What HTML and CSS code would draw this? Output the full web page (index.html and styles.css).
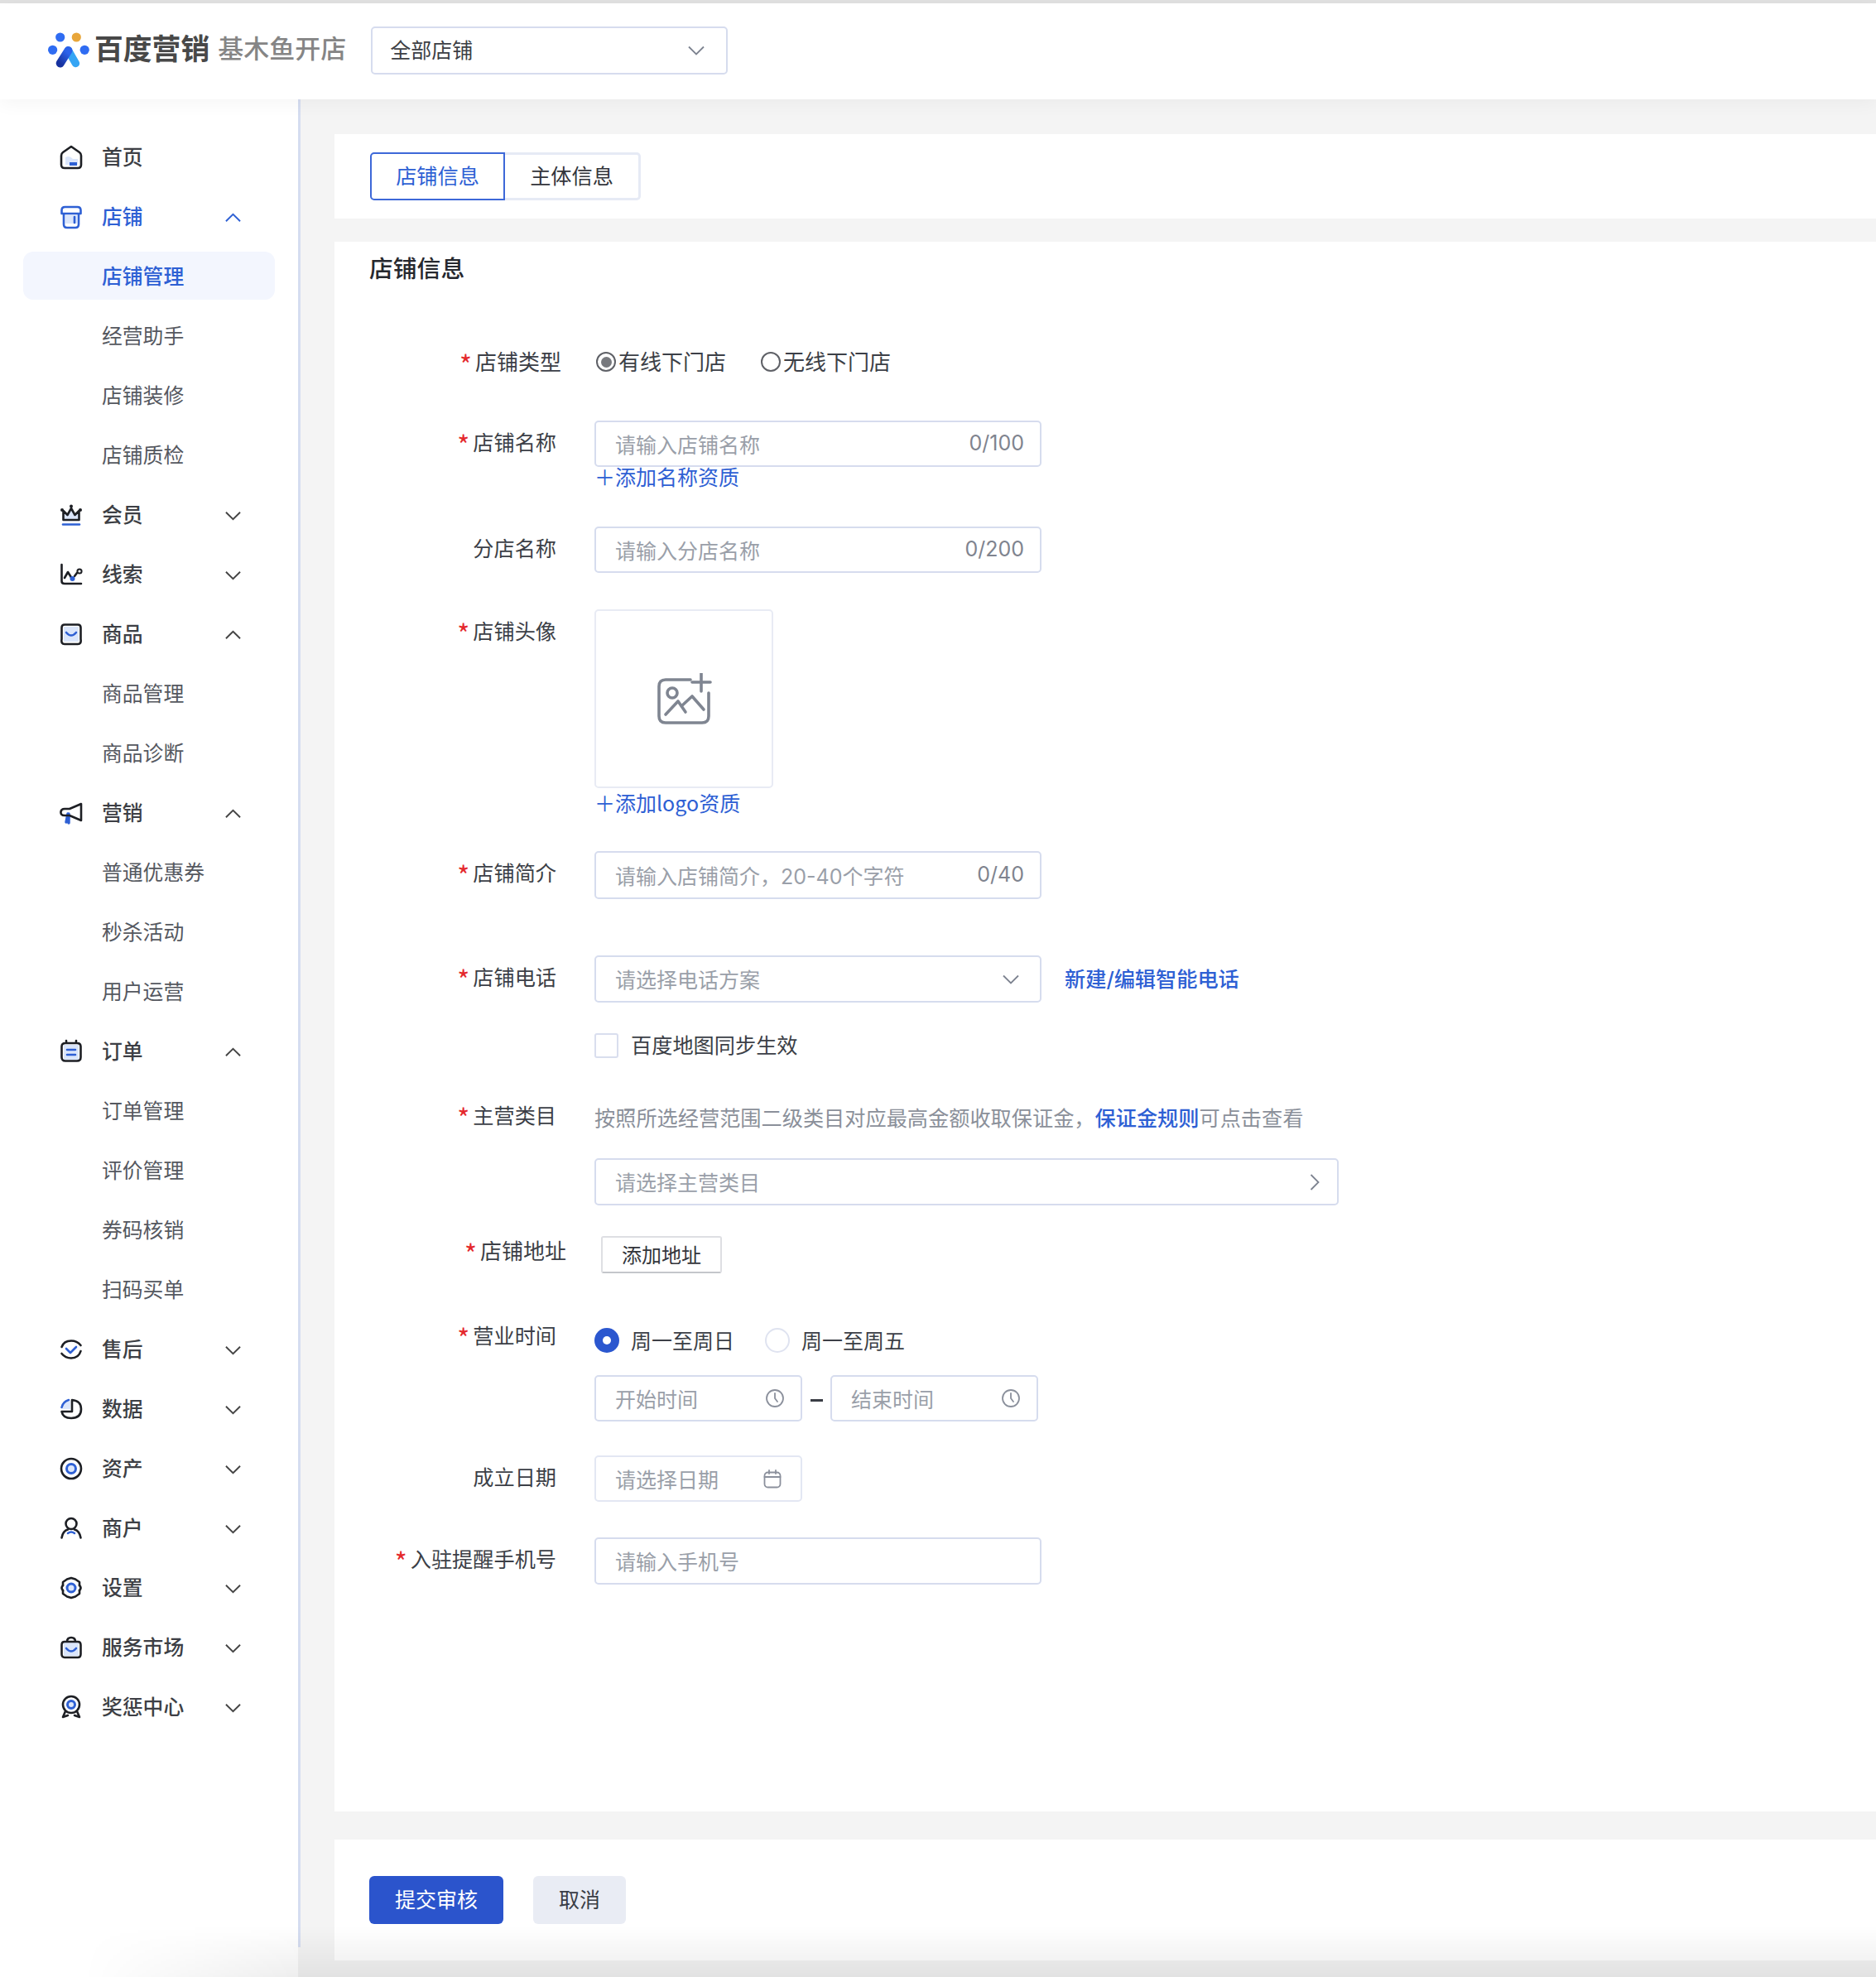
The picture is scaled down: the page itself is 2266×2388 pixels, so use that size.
FILE: index.html
```html
<!DOCTYPE html>
<html lang="zh-CN">
<head>
<meta charset="utf-8">
<title>店铺信息</title>
<link rel="stylesheet" href="styles.css">
</head>
<body>
<div class="page">
  <div class="topline"></div>
  <header class="header">
    <svg class="logo" viewBox="0 0 50 44" width="50" height="44">
      <defs>
        <linearGradient id="lgA" x1="0" y1="1" x2="0.6" y2="0"><stop offset="0" stop-color="#17329f"/><stop offset="1" stop-color="#2a62ea"/></linearGradient>
      </defs>
      <circle cx="14.7" cy="6" r="5.6" fill="#2f6cf2"/>
      <circle cx="34.3" cy="6" r="5.6" fill="#e8a63a"/>
      <circle cx="5.6" cy="21.3" r="5.6" fill="#2f6cf2"/>
      <circle cx="44.2" cy="21.3" r="5.6" fill="#2f6cf2"/>
      <path d="M24.5 22 L33.4 37.5" stroke="#35a5f4" stroke-width="9.5" stroke-linecap="round" fill="none"/>
      <path d="M24.5 22 L14.7 37.5" stroke="url(#lgA)" stroke-width="10" stroke-linecap="round" fill="none"/>
    </svg>
    <span class="brand">百度营销</span>
    <span class="brand-sub">基木鱼开店</span>
    <div class="shop-select"><span>全部店铺</span>
      <svg class="chev-sm" viewBox="0 0 20 12" width="20" height="12"><path d="M1 1.5 L10 10.5 L19 1.5"/></svg>
    </div>
  </header>

  <div class="main">
    <nav class="side">
      <a class="item top"><svg class="ico" viewBox="0 0 28 30"><path class="lt" d="M7 15 Q12 12 16 17 H22 V24 H7Z"/><path class="bl" d="M12 21 H21 V25 H12Z"/><path class="bk" d="M14 2 L24 9 Q26 10.5 26 13 V24 Q26 28 22 28 H6 Q2 28 2 24 V13 Q2 10.5 4 9Z"/></svg><span>首页</span></a>
      <a class="item top on"><svg class="ico" viewBox="0 0 28 30"><path class="lt" d="M7 13 H21 V23 H7Z"/><path class="blk" d="M2.5 11 V7 Q2.5 3 6.5 3 H21.5 Q25.5 3 25.5 7 V11Z M5 11 V24 Q5 28 9 28 H19 Q23 28 23 24 V11"/><path class="blk" d="M18 15 V22"/></svg><span>店铺</span><svg class="chev" viewBox="0 0 20 12"><path d="M1 10.5 L10 1.5 L19 10.5"/></svg></a>
      <a class="item sub active"><span>店铺管理</span></a>
      <a class="item sub"><span>经营助手</span></a>
      <a class="item sub"><span>店铺装修</span></a>
      <a class="item sub"><span>店铺质检</span></a>
      <a class="item top"><svg class="ico" viewBox="0 0 28 30"><path class="lt" d="M5 11 L10 15 L14 9 L18 15 L23 11 V21 H5Z"/><path class="bk" d="M4.5 10 L9.5 15 L14 7 L18.5 15 L23.5 10 V21 H4.5Z"/><circle cx="3" cy="9" r="2" class="dot"/><circle cx="14" cy="4.5" r="2" class="dot"/><circle cx="25" cy="9" r="2" class="dot"/><path class="blk" d="M4 26.5 H24"/></svg><span>会员</span><svg class="chev" viewBox="0 0 20 12"><path d="M1 1.5 L10 10.5 L19 1.5"/></svg></a>
      <a class="item top"><svg class="ico" viewBox="0 0 28 30"><path class="bk" d="M2.5 3 V23 Q2.5 26 6 26 H26"/><path class="bk" d="M6 19 L10 12 L15 20 M18 17 L21 13"/><circle class="dot-ring" cx="24" cy="11" r="2.6"/><circle cx="15.5" cy="20" r="3" class="blue-dot"/></svg><span>线索</span><svg class="chev" viewBox="0 0 20 12"><path d="M1 1.5 L10 10.5 L19 1.5"/></svg></a>
      <a class="item top"><svg class="ico" viewBox="0 0 28 30"><path class="lt" d="M5 6 H23 V24 H5Z"/><path class="bk" d="M6 3.5 H22 Q25.5 3.5 25.5 7 V21 Q26.5 27 22 27 H6 Q1.5 27 2.5 21 V7 Q2.5 3.5 6 3.5Z"/><path class="blk" d="M8 13 Q14 20 20 13"/></svg><span>商品</span><svg class="chev" viewBox="0 0 20 12"><path d="M1 10.5 L10 1.5 L19 10.5"/></svg></a>
      <a class="item sub"><span>商品管理</span></a>
      <a class="item sub"><span>商品诊断</span></a>
      <a class="item top"><svg class="ico" viewBox="0 0 28 30"><path class="blk heavy" d="M10 16 L8 26 M11 16 V27"/><path class="bk" d="M26 4 V24 L12 18 H6 Q1 18 1.5 13.5 Q2 10 6 10 H12Z"/></svg><span>营销</span><svg class="chev" viewBox="0 0 20 12"><path d="M1 10.5 L10 1.5 L19 10.5"/></svg></a>
      <a class="item sub"><span>普通优惠券</span></a>
      <a class="item sub"><span>秒杀活动</span></a>
      <a class="item sub"><span>用户运营</span></a>
      <a class="item top"><svg class="ico" viewBox="0 0 28 30"><path class="lt" d="M5 7 H23 V25 H5Z"/><path class="bk" d="M7 5 H21 Q25.5 5 25.5 9 V22 Q25.5 26.5 21 26.5 H7 Q2.5 26.5 2.5 22 V9 Q2.5 5 7 5Z M8 2 V5 M20 2 V5"/><path class="blk" d="M9 13 H19 M9 19 H19"/></svg><span>订单</span><svg class="chev" viewBox="0 0 20 12"><path d="M1 10.5 L10 1.5 L19 10.5"/></svg></a>
      <a class="item sub"><span>订单管理</span></a>
      <a class="item sub"><span>评价管理</span></a>
      <a class="item sub"><span>券码核销</span></a>
      <a class="item sub"><span>扫码买单</span></a>
      <a class="item top"><svg class="ico" viewBox="0 0 28 30"><path class="bk" d="M2.5 12 Q5 4.5 14 4.5 Q21 4.5 25.5 10 M25.5 17 Q23 25.5 14 25.5 Q7 25.5 2.5 20"/><path class="blk" d="M8 14 L13 19 L20 12"/></svg><span>售后</span><svg class="chev" viewBox="0 0 20 12"><path d="M1 1.5 L10 10.5 L19 1.5"/></svg></a>
      <a class="item top"><svg class="ico" viewBox="0 0 28 30"><path class="lt" d="M3 15 Q4 6 13 5 V15Z"/><path class="blk" d="M2.5 13 Q4 6 11 4"/><path class="bk" d="M15 4 Q26 5 26 15 Q26 26 14 26 Q4 26 2.5 18 H15Z"/></svg><span>数据</span><svg class="chev" viewBox="0 0 20 12"><path d="M1 1.5 L10 10.5 L19 1.5"/></svg></a>
      <a class="item top"><svg class="ico" viewBox="0 0 28 30"><circle cx="14" cy="15" r="12" class="bk"/><circle cx="14" cy="15" r="5.5" class="core"/></svg><span>资产</span><svg class="chev" viewBox="0 0 20 12"><path d="M1 1.5 L10 10.5 L19 1.5"/></svg></a>
      <a class="item top"><svg class="ico" viewBox="0 0 28 30"><circle cx="14" cy="9.5" r="6.5" class="bk"/><path class="blk" d="M10 21 Q14 18 18 21"/><path class="bk" d="M2.5 26.5 Q4 18 10 16.5 M25.5 26.5 Q24 18 18 16.5"/></svg><span>商户</span><svg class="chev" viewBox="0 0 20 12"><path d="M1 1.5 L10 10.5 L19 1.5"/></svg></a>
      <a class="item top"><svg class="ico" viewBox="0 0 28 30"><path class="bk" d="M9 4.5 L14 3 L19 4.5 L24 8 L24 12 M24 18 L24 22 L19 25.5 L14 27 L9 25.5 L4 22 L4 18 M4 12 L4 8 L9 4.5"/><path class="bk" d="M24 12 Q27 15 24 18 M4 12 Q1 15 4 18"/><circle cx="14" cy="15" r="5" class="core"/></svg><span>设置</span><svg class="chev" viewBox="0 0 20 12"><path d="M1 1.5 L10 10.5 L19 1.5"/></svg></a>
      <a class="item top"><svg class="ico" viewBox="0 0 28 30"><path class="lt" d="M5 9 H23 V25 H5Z"/><path class="bk" d="M6 8 H22 Q25.5 8 25.5 12 V23 Q25.5 27 22 27 H6 Q2.5 27 2.5 23 V12 Q2.5 8 6 8Z M9 8 Q9 3 14 3 Q19 3 19 8"/><path class="blk" d="M8 16 Q14 23 20 16"/></svg><span>服务市场</span><svg class="chev" viewBox="0 0 20 12"><path d="M1 1.5 L10 10.5 L19 1.5"/></svg></a>
      <a class="item top"><svg class="ico" viewBox="0 0 28 30"><circle cx="14" cy="12" r="10" class="bk"/><circle cx="14" cy="12" r="4.5" class="core"/><path class="bk" d="M7 20 L4 27 L10 25 M21 20 L24 27 L18 25"/></svg><span>奖惩中心</span><svg class="chev" viewBox="0 0 20 12"><path d="M1 1.5 L10 10.5 L19 1.5"/></svg></a>
    </nav>
    <div class="side-rule"></div>

    <main class="content">
      <section class="panel tabs-panel">
        <div class="tabs">
          <span class="tab tab-on">店铺信息</span>
          <span class="tab">主体信息</span>
        </div>
      </section>

      <section class="panel form-panel">
        <h2 class="title">店铺信息</h2>

        <div class="field f-type">
          <label class="lbl lbl-lg lh-37"><i class="star">*</i>店铺类型</label>
          <div class="ctl-row">
            <span class="ring ring-on"></span><span class="ring-text">有线下门店</span>
            <span class="ring ring-2"></span><span class="ring-text">无线下门店</span>
          </div>
        </div>

        <div class="field f-name">
          <label class="lbl"><i class="star">*</i>店铺名称</label>
          <div>
            <div class="input w-md"><span class="ph">请输入店铺名称</span><span class="count">0/100</span></div>
            <a class="link add">＋添加名称资质</a>
          </div>
        </div>

        <div class="field f-branch">
          <label class="lbl">分店名称</label>
          <div class="input w-md"><span class="ph">请输入分店名称</span><span class="count">0/200</span></div>
        </div>

        <div class="field f-avatar">
          <label class="lbl"><i class="star">*</i>店铺头像</label>
          <div>
            <div class="upload">
              <svg viewBox="0 0 68 62" width="68" height="62" class="up-ico">
                <path d="M42 8 H12 Q4 8 4 16 V52 Q4 60 12 60 H56 Q64 60 64 52 V24"/>
                <circle cx="20" cy="24" r="6"/>
                <path d="M12 50 L27 34 L36 47 M31 40 L44 28 L58 44"/>
                <path d="M55 0 V22 M44 11 H66"/>
              </svg>
            </div>
            <a class="link add add-logo">＋添加logo资质</a>
          </div>
        </div>

        <div class="field f-intro">
          <label class="lbl"><i class="star">*</i>店铺简介</label>
          <div class="input w-md h-58"><span class="ph">请输入店铺简介，20-40个字符</span><span class="count">0/40</span></div>
        </div>

        <div class="field f-phone">
          <label class="lbl"><i class="star">*</i>店铺电话</label>
          <div class="input w-md h-57"><span class="ph">请选择电话方案</span>
            <svg class="chev-sm in-input" viewBox="0 0 20 12" width="20" height="12"><path d="M1 1.5 L10 10.5 L19 1.5"/></svg>
          </div>
          <a class="link phone-link">新建/编辑智能电话</a>
        </div>

        <div class="field f-check">
          <div class="spacer"></div>
          <span class="check"></span><span class="check-text">百度地图同步生效</span>
        </div>

        <div class="field f-cat">
          <label class="lbl lh-19"><i class="star">*</i>主营类目</label>
          <p class="hint">按照所选经营范围二级类目对应最高金额收取保证金，<a class="link strong">保证金规则</a>可点击查看</p>
        </div>
        <div class="field f-cat-sel">
          <div class="spacer"></div>
          <div class="input w-lg h-57"><span class="ph">请选择主营类目</span>
            <svg viewBox="0 0 12 20" width="12" height="20" class="chev-r"><path d="M1.5 1 L10.5 10 L1.5 19"/></svg>
          </div>
        </div>

        <div class="field f-addr">
          <label class="lbl lbl-addr lh-33"><i class="star">*</i>店铺地址</label>
          <button class="btn-add" type="button">添加地址</button>
        </div>

        <div class="field f-hours">
          <label class="lbl lh-17"><i class="star">*</i>营业时间</label>
          <div class="ctl-row">
            <span class="radio radio-on"></span><span class="radio-text">周一至周日</span>
            <span class="radio radio-2"></span><span class="radio-text">周一至周五</span>
          </div>
        </div>
        <div class="field f-time">
          <div class="spacer"></div>
          <div class="input w-sm"><span class="ph">开始时间</span>
            <svg class="clock" viewBox="0 0 24 24" width="24" height="24"><circle cx="12" cy="12" r="10"/><path d="M12 6 V12 L15 16"/></svg>
          </div>
          <span class="dash"></span>
          <div class="input w-sm"><span class="ph">结束时间</span>
            <svg class="clock" viewBox="0 0 24 24" width="24" height="24"><circle cx="12" cy="12" r="10"/><path d="M12 6 V12 L15 16"/></svg>
          </div>
        </div>

        <div class="field f-date">
          <label class="lbl">成立日期</label>
          <div class="input input-lt w-sm"><span class="ph">请选择日期</span>
            <svg class="clock cal" viewBox="0 0 24 24" width="24" height="24"><rect x="2.5" y="4.5" width="19" height="18" rx="4"/><path d="M2.5 10 H21.5 M8 2 V6 M16 2 V6"/></svg>
          </div>
        </div>

        <div class="field f-mobile">
          <label class="lbl lbl-mobile"><i class="star">*</i>入驻提醒手机号</label>
          <div class="input w-md h-57"><span class="ph">请输入手机号</span></div>
        </div>
      </section>

      <section class="panel foot-panel">
        <button class="btn btn-primary" type="button">提交审核</button>
        <button class="btn btn-ghost" type="button">取消</button>
      </section>
    </main>
  </div>
  <div class="edge-shade"></div>
</div>
</body>
</html>
```
FILE: styles.css
```css
* { box-sizing: border-box; }
html, body { margin: 0; padding: 0; background: #fff; }
body { font-family: "Noto Sans CJK SC", "Noto Sans", sans-serif; color: #3a3d45; }
p, h2 { margin: 0; }
i { font-style: normal; }

.page { position: relative; width: 2266px; height: 2388px; overflow: hidden; }
.topline { height: 4px; background: #e0e0e0; }

.header {
  position: relative; z-index: 2;
  height: 116px; background: #fff; display: flex; align-items: center; padding-left: 58px;
  box-shadow: 0 6px 20px rgba(0, 0, 0, .04);
}
.logo { flex: none; margin-bottom: 3px; }
.brand { margin: 0 0 10px 6px; font-size: 34.8px; font-weight: 700; color: #484848; line-height: 44px; white-space: nowrap; }
.brand-sub { margin: 0 0 10px 10px; font-size: 31px; font-weight: 500; color: #858585; line-height: 44px; white-space: nowrap; }
.shop-select {
  margin: 0 0 2px 30px; width: 431px; height: 58px; border: 2.5px solid #d6dcee; border-radius: 5px;
  display: flex; align-items: center; justify-content: space-between; padding: 0 26px 0 21px;
  font-size: 25px; color: #3d3f45;
}
.shop-select span { margin-bottom: 4px; }
.chev-sm { fill: none; stroke: #7d8390; stroke-width: 1.8; flex: none; }
.in-input { margin-right: 6px; }

.main { display: flex; height: 2268px; background: #f4f4f4; }
.side { width: 360px; background: #fff; padding-top: 33px; flex: none; }
.side-rule { width: 3px; height: 2232px; background: #d5ddf0; flex: none; }

.item { display: flex; align-items: center; height: 72px; font-size: 24.8px; color: #3d3f45; position: relative; }
.item span { margin-bottom: 3px; }
.top { padding-left: 72px; font-weight: 500; }
.sub { padding-left: 123px; color: #55585f; }
.on { color: #2e60d4; }
.active { color: #2e60d4; font-weight: 500; }
.active::before {
  content: ""; position: absolute; left: 28px; top: 7px; width: 304px; height: 58px;
  background: #f3f6fe; border-radius: 12px;
}
.active span { position: relative; }
.ico { width: 28px; height: 30px; flex: none; margin-top: 2px; }
.top span { margin-left: 23px; }
.chev { width: 19px; height: 12px; fill: none; stroke: #444; stroke-width: 2; margin: 3px 69px 0 auto; flex: none; }
.on .chev { stroke: #2e60d4; }

.bk { fill: none; stroke: #1d1f24; stroke-width: 2.6; stroke-linejoin: round; stroke-linecap: round; }
.blk { fill: none; stroke: #2e60d4; stroke-width: 2.6; stroke-linejoin: round; stroke-linecap: round; }
.heavy { stroke-width: 3.5; }
.lt { fill: #dbe6fb; }
.bl { fill: #2e60d4; }
.dot { fill: #1d1f24; }
.dot-ring { fill: none; stroke: #1d1f24; stroke-width: 2; }
.blue-dot { fill: #2e60d4; }
.core { fill: #dbe6fb; stroke: #2e60d4; stroke-width: 3; }

.content { flex: 1; padding-left: 41px; }
.panel { background: #fff; }
.tabs-panel { margin-top: 42px; height: 102px; padding: 22px 0 0 43px; }
.tabs { display: flex; }
.tab {
  width: 107px; height: 58px; display: flex; align-items: center; justify-content: center;
  border: 3px solid #e6eaf5; border-left: 0; border-radius: 0 5px 5px 0; font-size: 25.2px; color: #33353b; padding-bottom: 4px;
}
.tab { width: 164px; }
.tab-on { width: 163px; border: 2.5px solid #3d68d8; border-radius: 5px 0 0 5px; color: #2e60d4; }

.form-panel { margin-top: 28px; height: 1896px; padding: 12px 0 0 42px; }
.title { font-size: 28.8px; font-weight: 500; line-height: 37px; height: 40px; color: #26282e; }

.field { display: flex; align-items: flex-start; }
.lbl { width: 226px; margin-right: 46px; text-align: right; font-size: 25.2px; line-height: 51px; color: #3c3f47; white-space: nowrap; flex: none; }
.lbl-lg { width: 232px; margin-right: 40px; font-size: 26px; }
.lbl-addr { width: 238px; margin-right: 42px; font-size: 26px; }
.lh-37 { line-height: 37px; }
.lh-33 { line-height: 33px; }
.lh-19 { line-height: 19px; }
.lh-17 { line-height: 17px; }
.star { color: #e4282c; margin-right: 4px; font-size: 32px; line-height: 0; vertical-align: -6px; }
.spacer { width: 272px; flex: none; }

.f-type { margin-top: 73px; height: 40px; }
.f-name { margin-top: 51px; }
.f-branch { margin-top: 46px; }
.f-avatar { margin-top: 44px; }
.f-intro { margin-top: 44px; }
.f-phone { margin-top: 68px; }
.f-check { margin-top: 35px; align-items: center; }
.f-cat { margin-top: 58px; height: 28px; }
.f-cat-sel { margin-top: 34px; }
.f-addr { margin-top: 37px; }
.f-hours { margin-top: 66px; }
.f-time { margin-top: 27px; }
.f-date { margin-top: 41px; }
.f-mobile { margin-top: 43px; }

.input {
  height: 56px; border: 2.5px solid #d6dcee; border-radius: 5px; background: #fff; flex: none;
  display: flex; align-items: center; justify-content: space-between; padding: 0 19px 0 23px;
  font-size: 25px; font-family: "Inter", "Noto Sans CJK SC", sans-serif;
}
.input-lt { border-color: #e3e7f3; }
.w-md { width: 540px; }
.w-lg { width: 899px; }
.w-sm { width: 251px; }
.h-58 { height: 58px; }
.h-57 { height: 57px; }
.ph { color: #9a9fa9; white-space: nowrap; margin-bottom: 1px; }
.count { color: #7f848f; white-space: nowrap; margin-bottom: 3px; }
.link { color: #2e60d4; white-space: nowrap; }
.add { display: block; font-size: 25px; line-height: 23px; padding-bottom: 3px; }
.add-logo { margin-top: 6px; }
.phone-link { margin: 15px 0 0 28px; font-size: 25.2px; line-height: 28px; font-weight: 500; font-family: "Inter", "Noto Sans CJK SC", sans-serif; }
.strong { font-weight: 500; }

.ctl-row { display: flex; align-items: center; height: 40px; font-size: 26px; }
.ring { width: 24px; height: 24px; border: 2px solid #5f6167; border-radius: 50%; flex: none; margin-left: 2px; display: flex; align-items: center; justify-content: center; }
.ring-on::after { content: ""; width: 13px; height: 13px; border-radius: 50%; background: #77797e; }
.ring-text { margin: 0 0 3px 3px; color: #3c3f47; line-height: 40px; }
.ring-2 { margin-left: 42px; }

.upload { width: 216px; height: 216px; border: 2px solid #e8ebf4; border-radius: 5px; display: flex; align-items: center; justify-content: center; }
.up-ico { fill: none; stroke: #7f8591; stroke-width: 3.6; stroke-linecap: round; stroke-linejoin: round; }

.check { width: 29px; height: 30px; border: 2.5px solid #d9deee; border-radius: 3px; flex: none; }
.check-text { margin: 0 0 3px 15px; font-size: 25.2px; line-height: 30px; color: #3c3f47; }

.hint { font-size: 25.2px; line-height: 25px; color: #8b909a; white-space: nowrap; }
.chev-r { fill: none; stroke: #7d8390; stroke-width: 1.8; flex: none; margin-right: 2px; }

.btn-add {
  width: 146px; height: 45px; background: #fff; border: 2px solid #dedfe3; border-bottom-color: #c4c6cb; border-radius: 3px;
  font: inherit; font-size: 24px; color: #33353b; padding: 0 0 2px;
}

.f-hours .ctl-row { height: 30px; font-size: 25px; }
.radio { width: 30px; height: 30px; border-radius: 50%; flex: none; }
.radio-on { margin-left: 0; background: #2b57cf; display: flex; align-items: center; justify-content: center; }
.radio-on::after { content: ""; width: 10px; height: 10px; border-radius: 50%; background: #fff; }
.radio-2 { margin-left: 37px; border: 2px solid #dfe3f0; }
.radio-text { margin: 0 0 3px 14px; color: #3c3f47; }

.dash { width: 15px; height: 3px; margin: 29px 9px 0 10px; background: #3a3d45; flex: none; }
.clock { fill: none; stroke: #8b909c; stroke-width: 1.8; stroke-linecap: round; flex: none; }
.cal { margin-right: 3px; }

.foot-panel { margin-top: 34px; height: 146px; padding: 44px 0 0 42px; display: flex; align-items: flex-start; gap: 36px; }
.btn { height: 58px; border: 0; border-radius: 6px; font: inherit; font-size: 25px; padding: 0 0 4px; }
.btn-primary { width: 162px; background: #2b54cc; color: #fff; }
.btn-ghost { width: 112px; background: #e9ecf4; color: #3a3d45; }

.edge-shade {
  position: absolute; left: 0; right: 0; bottom: 0; height: 62px; pointer-events: none;
  background: linear-gradient(to bottom, rgba(0, 0, 0, 0), rgba(0, 0, 0, .07));
  -webkit-mask-image: linear-gradient(to right, transparent 100px, #000 370px);
  mask-image: linear-gradient(to right, transparent 100px, #000 370px);
}
```
